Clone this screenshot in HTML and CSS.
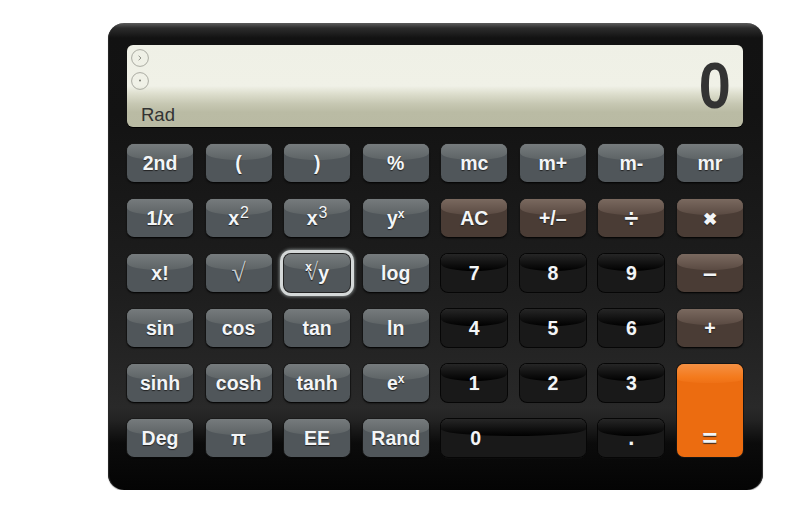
FILE: index.html
```html
<!DOCTYPE html>
<html lang="en">
<head>
<meta charset="utf-8">
<title>Calculator</title>
<link rel="stylesheet" href="styles.css">
</head>
<body>
<main class="calc">
  <section class="display">
    <div class="indicators">
      <svg class="ind" viewBox="0 0 18 18"><circle cx="9" cy="9" r="8.4"/><path d="M7.6 6.8 10 9l-2.4 2.2"/></svg>
      <svg class="ind" viewBox="0 0 18 18"><circle cx="9" cy="9" r="8.4"/><circle class="dot" cx="9" cy="8.6" r="1"/></svg>
      <span class="mode">Rad</span>
    </div>
    <div class="value">0</div>
  </section>
  <section class="keys">
    <button class="key">2nd</button><button class="key">(</button><button class="key">)</button><button class="key">%</button>
    <button class="key">mc</button><button class="key">m+</button><button class="key">m-</button><button class="key">mr</button>

    <button class="key">1/x</button><button class="key">x<sup>2</sup></button><button class="key">x<sup>3</sup></button><button class="key">y<sup class="small">x</sup></button>
    <button class="key op">AC</button><button class="key op">+/–</button><button class="key op"><span class="big">÷</span></button><button class="key op"><span class="times">✖</span></button>

    <button class="key">x!</button><button class="key"><span class="radical">√</span></button>
    <button class="key focused"><span class="root"><span class="root-x">x</span><span class="root-sign">√</span>y</span></button><button class="key">log</button>
    <button class="key num">7</button><button class="key num">8</button><button class="key num">9</button><button class="key op"><span class="big">–</span></button>

    <button class="key">sin</button><button class="key">cos</button><button class="key">tan</button><button class="key">ln</button>
    <button class="key num">4</button><button class="key num">5</button><button class="key num">6</button><button class="key op">+</button>

    <button class="key">sinh</button><button class="key">cosh</button><button class="key">tanh</button><button class="key">e<sup class="small">x</sup></button>
    <button class="key num">1</button><button class="key num">2</button><button class="key num">3</button><button class="key equals">=</button>

    <button class="key">Deg</button><button class="key">π</button><button class="key">EE</button><button class="key">Rand</button>
    <button class="key num zero">0</button><button class="key num dotkey">.</button>
  </section>
</main>
</body>
</html>
```
FILE: styles.css
```css
* { box-sizing: border-box; }
html, body { margin: 0; background: #fff; }
body { padding: 23px 0 0 108px; font-family: "Liberation Sans", Arial, sans-serif; }

.calc {
  width: 655px;
  height: 467px;
  padding: 22px 20px 33px 19px;
  border-radius: 16px;
  background: linear-gradient(180deg, #5c5c5c 0, #2c2c2c 5px, #121212 15px, #131313 90px, #1e1e1e 270px, #292929 385px, #232323 397px, #0b0b0b 420px, #040404 467px);
  box-shadow: inset 2px 0 1px -1px #2a2a2a, inset -2px 0 1px -1px #333, 0 1px 1px #aaa;
  display: flex;
  flex-direction: column;
  gap: 17px;
}

.display {
  height: 82px;
  border-radius: 6px;
  display: flex;
  justify-content: space-between;
  background: linear-gradient(180deg, #eff0e6 0, #f0f1e7 50%, #dcddcc 60%, #c6c7b2 72%, #babba4 82%, #b9baa3 100%);
  box-shadow: 0 1px 0 #000;
}
.indicators { display: flex; flex-direction: column; gap: 5px; padding: 4px 0 2px 4px; flex: 1; }
.ind { width: 18px; height: 18px; fill: none; stroke: #aaaba2; stroke-width: 1; }
.ind path { stroke: #8f9088; }
.ind .dot { fill: #77786f; stroke: none; }
.mode { margin: auto 0 0 10px; font-size: 18.5px; line-height: 21px; color: #333; }
.value { font-size: 64px; font-weight: bold; line-height: 82px; color: #333; padding-right: 13px; transform: scaleX(.9); transform-origin: right center; }

.keys {
  display: grid;
  grid-template-columns: repeat(8, 66px);
  grid-auto-rows: 38px;
  column-gap: 12.57px;
  row-gap: 17px;
}
.key {
  position: relative;
  padding: 0;
  border: 0;
  border-radius: 7px;
  font: bold 19.5px/38px "Liberation Sans", Arial, sans-serif;
  color: #f3f5f7;
  text-align: center;
  background: #50565a;
  box-shadow: 0 1px 0 #777c7e inset, 0 1px 2px #000, 0 0 0 1px #1c1c1c;
  text-shadow: 0 1px 1px #222;
  z-index: 0;
}
.key::before {
  content: "";
  position: absolute;
  left: 0;
  right: 0;
  top: 0;
  height: 16px;
  border-radius: 7px 7px 50% 50% / 7px 7px 7px 7px;
  background: linear-gradient(180deg, #767b7d, #5d6365);
  z-index: -1;
}
.key sup { font-size: 16px; line-height: 0; vertical-align: 7px; font-weight: normal; margin-left: 1px; }
.key sup.small { font-size: 12px; font-weight: bold; vertical-align: 7px; margin-left: 0; }

.op { background: #4a3c35; box-shadow: 0 1px 0 #7c6c62 inset, 0 1px 2px #000, 0 0 0 1px #1c1c1c; }
.op::before { background: linear-gradient(180deg, #7a695f, #5a4a42); }
.big { font-size: 25px; }
.times { font-size: 17px; }

.num { background: #191919; box-shadow: 0 1px 0 #333 inset, 0 0 0 1px #060606, 0 1px 1px #2c2c2c; }
.num::before { background: linear-gradient(180deg, #262626, #000); height: 17px; border-radius: 7px 7px 50% 50% / 7px 7px 7px 7px; }
.zero { grid-column: span 2; text-align: left; padding-left: 29px; }
.dotkey { font-size: 22px; }

.equals {
  grid-row: 5 / span 2;
  grid-column: 8;
  background: #ec6c10;
  padding-top: 54px;
  font-size: 26px;
  box-shadow: 0 0 0 1px #151515;
}
.equals::before { background: linear-gradient(180deg, #f49044, #f47a1c 70%, #ef7116); height: 19px; border-radius: 7px 7px 50% 50% / 7px 7px 4px 4px; }

.focused { box-shadow: 0 0 0 1px #222, 0 0 0 4px #d4d8d8, 0 0 3px 5px #777c7c; }
.radical { font-family: "Liberation Serif", serif; font-weight: normal; font-size: 26px; color: #c8cdd0; }
.root { display: inline-flex; align-items: baseline; }
.root-x { font-size: 12px; margin-right: -7px; position: relative; top: -9px; }
.root-sign { font-family: "Liberation Serif", serif; font-weight: normal; font-size: 24px; line-height: 20px; color: #c8cdd0; }
```
